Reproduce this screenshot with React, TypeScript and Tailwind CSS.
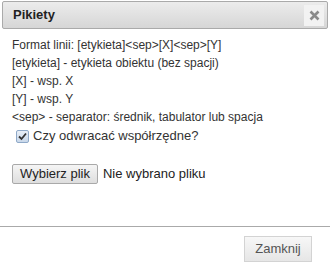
import React from "react";

export default function App() {
  return (
    <div className="w-[330px] h-[268px] bg-white overflow-hidden text-[#333] flex flex-col" style={{ fontFamily: '"Liberation Sans", Arial, sans-serif' }}>
      <div className="mx-[2px] mt-[1px] h-[28px] shrink-0 border border-[#aaaaaa] rounded-[2px] bg-gradient-to-b from-[#ececec] to-[#d6d6d6] flex items-center justify-between pl-[10px] pr-[3px]">
        <span className="font-bold text-[13px] text-[#222]">Pikiety</span>
        <div className="w-[20px] h-[21px] bg-[#f2f2f2] flex items-center justify-center">
          <svg width="11" height="11" viewBox="0 0 11 11">
            <path d="M1.5 1.5 L9.5 9.5 M9.5 1.5 L1.5 9.5" stroke="#8a8a8a" strokeWidth="2.6" strokeLinecap="butt" />
          </svg>
        </div>
      </div>
      <div className="flex-1 px-[12px] pt-[7px] text-[12px] leading-[18px]">
        <div>Format linii: [etykieta]&lt;sep&gt;[X]&lt;sep&gt;[Y]</div>
        <div>[etykieta] - etykieta obiektu (bez spacji)</div>
        <div>[X] - wsp. X</div>
        <div>[Y] - wsp. Y</div>
        <div>&lt;sep&gt; - separator: średnik, tabulator lub spacja</div>
        <div className="flex items-center gap-[4px] mt-[1px]">
          <span className="ml-[4px] w-[13px] h-[13px] border border-[#8fa9c8] rounded-[2px] bg-gradient-to-b from-[#e9eff7] to-[#c9d8ea] flex items-center justify-center">
            <svg width="9" height="9" viewBox="0 0 9 9">
              <path d="M1 4.5 L3.5 7 L8 1.5" stroke="#333" strokeWidth="1.8" fill="none" />
            </svg>
          </span>
          <span className="text-[13px]">Czy odwracać współrzędne?</span>
        </div>
        <div className="flex items-center mt-[19px] gap-[5px] text-[13px]">
          <button className="h-[20px] px-[7px] border border-[#a9a9a9] rounded-[2px] bg-gradient-to-b from-[#f5f5f5] to-[#dedede] text-[13px] text-[#222]">Wybierz plik</button>
          <span className="text-[#222]">Nie wybrano pliku</span>
        </div>
      </div>
      <div className="shrink-0 h-[42px] border-t border-[#aaaaaa] flex justify-end items-start pt-[9px] pr-[18px]">
        <button className="w-[68px] h-[26px] border border-[#d3d3d3] bg-gradient-to-b from-[#f7f7f7] to-[#e6e6e6] text-[13px] text-[#555]">Zamknij</button>
      </div>
    </div>
  );
}
